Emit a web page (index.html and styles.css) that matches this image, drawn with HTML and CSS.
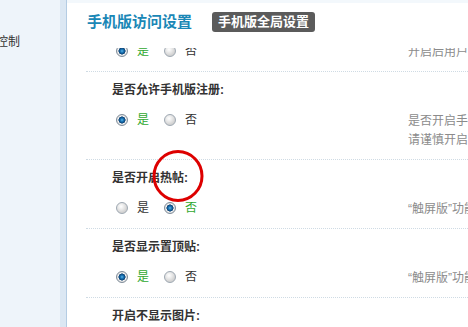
FILE: index.html
```html
<!DOCTYPE html>
<html lang="zh">
<head>
<meta charset="utf-8">
<title>手机版访问设置</title>
<link rel="stylesheet" href="styles.css">
</head>
<body>
<div class="page">
  <aside class="sidebar">
    <div class="side-item">控制</div>
  </aside>
  <div class="divider"></div>
  <main class="main">
    <header class="head">
      <h1 class="title">手机版访问设置</h1>
      <span class="badge">手机版全局设置</span>
    </header>
    <div class="content">
      <div class="rows">
        <div class="row first">
          <div class="label">是否开启手机版:</div>
          <div class="body">
            <div class="opts">
              <span class="radio on"></span><span class="opt on">是</span>
              <span class="radio"></span><span class="opt">否</span>
            </div>
            <div class="help">开启后用户访问论坛时自动跳转</div>
          </div>
        </div>
        <div class="row">
          <div class="label">是否允许手机版注册:</div>
          <div class="body">
            <div class="opts">
              <span class="radio on"></span><span class="opt on">是</span>
              <span class="radio"></span><span class="opt">否</span>
            </div>
            <div class="help">是否开启手机版注册功能<br>请谨慎开启此功能</div>
          </div>
        </div>
        <div class="row">
          <div class="label">是否开启热帖:</div>
          <div class="body">
            <div class="opts">
              <span class="radio"></span><span class="opt">是</span>
              <span class="radio on"></span><span class="opt on">否</span>
            </div>
            <div class="help">“触屏版”功能设置</div>
          </div>
        </div>
        <div class="row">
          <div class="label">是否显示置顶贴:</div>
          <div class="body">
            <div class="opts">
              <span class="radio on"></span><span class="opt on">是</span>
              <span class="radio"></span><span class="opt">否</span>
            </div>
            <div class="help">“触屏版”功能设置</div>
          </div>
        </div>
        <div class="row">
          <div class="label">开启不显示图片:</div>
          <div class="body">
            <div class="opts">
              <span class="radio"></span><span class="opt">是</span>
              <span class="radio on"></span><span class="opt on">否</span>
            </div>
            <div class="help">开启后不显示图片</div>
          </div>
        </div>
      </div>
    </div>
  </main>
  <svg class="mark" width="60" height="60" viewBox="0 0 60 60" aria-hidden="true">
    <ellipse cx="30" cy="30" rx="24" ry="24.5" fill="none" stroke="#dd0000" stroke-width="3"/>
  </svg>
</div>
</body>
</html>
```

FILE: styles.css
```css
html, body {
  margin: 0;
  padding: 0;
}
body {
  width: 468px;
  height: 327px;
  overflow: hidden;
  background: #fff;
  font-family: "Liberation Sans", "Noto Sans CJK SC", sans-serif;
  font-size: 12px;
  color: #333;
}
.page {
  position: relative;
  display: flex;
  width: 468px;
  height: 327px;
  overflow: hidden;
}
.sidebar {
  width: 60px;
  flex: none;
  background: #eef4fa;
  overflow: hidden;
}
.side-item {
  margin-top: 35px;
  margin-left: -4px;
  line-height: 14px;
  white-space: nowrap;
  color: #333;
}
.divider {
  width: 6px;
  flex: none;
  background: #dbe7f3;
  border-right: 1px solid #b4cce3;
}
.main {
  flex: 1;
  min-width: 0;
  display: flex;
  flex-direction: column;
  overflow: hidden;
}
.head {
  flex: none;
  height: 48px;
  box-sizing: border-box;
  border-top: 3px solid #f3f8fc;
  padding: 9px 0 0 20px;
  display: flex;
  align-items: flex-start;
  gap: 20px;
  background: #fff;
  position: relative;
  z-index: 1;
}
.title {
  margin: 0;
  font-size: 15px;
  font-weight: bold;
  line-height: 20px;
  color: #1a87b6;
}
.badge {
  display: inline-block;
  height: 20px;
  line-height: 20px;
  padding: 0 6px;
  border-radius: 3px;
  background: #5b5b5b;
  color: #fff;
  font-size: 13px;
  font-weight: bold;
}
.content {
  flex: 1;
  overflow: hidden;
}
.rows {
  margin-left: 19px;
}
.row {
  border-top: 1px dotted #cfdbe4;
  padding: 9px 0 9px 26px;
  white-space: nowrap;
}
.row.first {
  margin-top: -46px;
}
.label {
  font-weight: bold;
  line-height: 18px;
  color: #333;
}
.body {
  display: flex;
  align-items: flex-start;
}
.opts {
  width: 292px;
  flex: none;
  padding: 10px 0 0 4px;
  height: 22px;
  display: flex;
  align-items: center;
}
.radio {
  width: 10px;
  height: 10px;
  border-radius: 50%;
  border: 1px solid #9ea8b2;
  background: radial-gradient(circle at 40% 35%, #ffffff 0, #f1f1f1 2px, #d2d2d2 6px);
  margin-right: 9px;
  flex: none;
}
.radio.on {
  border-color: #7f8c99;
  background: radial-gradient(circle at 50% 50%, #5fb6e6 0, #1a74b5 1.6px, #0c3f70 3.3px, #f4f4f4 3.8px, #dcdcdc 5px);
}
.opt {
  margin-right: 15px;
  line-height: 22px;
  color: #333;
}
.opt.on {
  color: #2fa82f;
}
.help {
  padding-top: 13px;
  line-height: 19px;
  color: #8b8b8b;
}
.mark {
  position: absolute;
  left: 148px;
  top: 146px;
  z-index: 2;
}
```
